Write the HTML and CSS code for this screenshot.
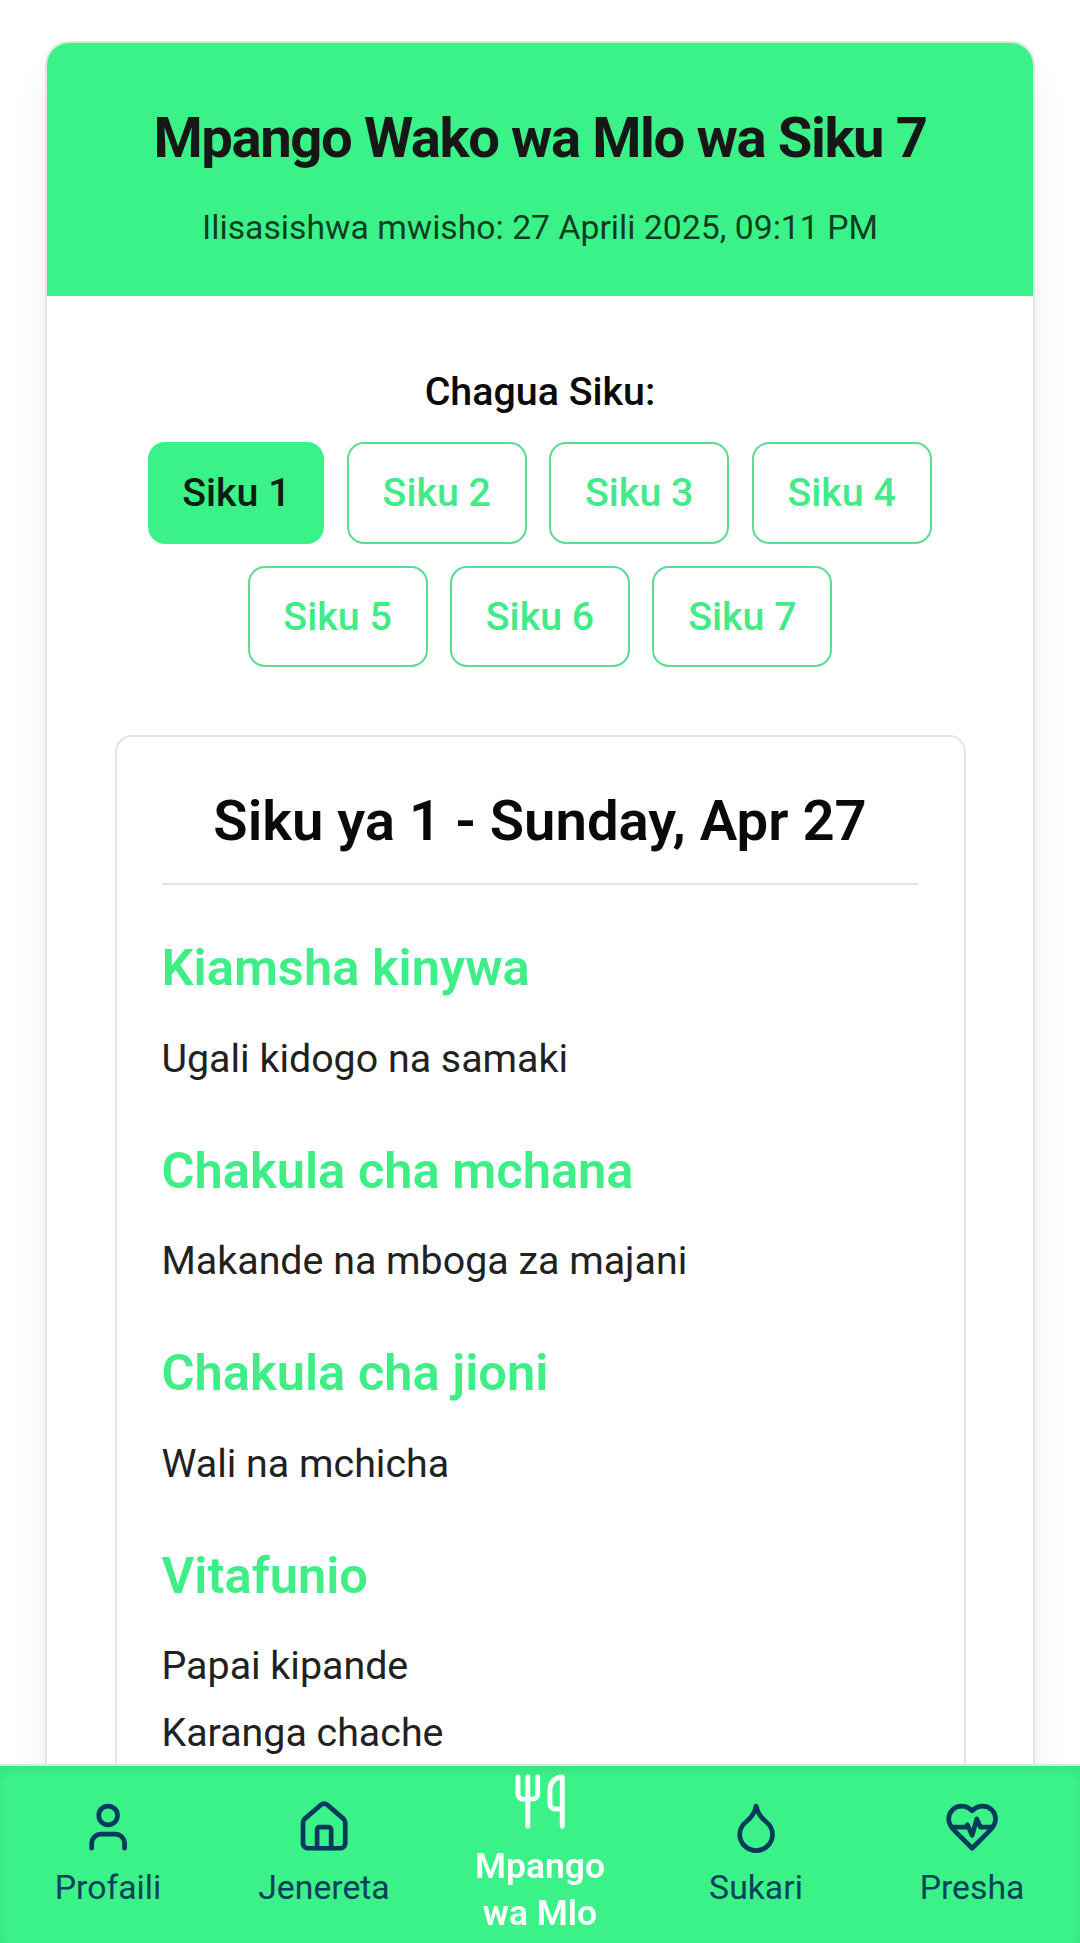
FILE: index.html
```html
<!doctype html>
<html lang="sw">

<head>
    <meta charset="utf-8" />
    <meta name="viewport" content="width=device-width, initial-scale=1.0" />
    <title>Mpango wa Mlo</title>
    <link rel="stylesheet" href="styles.css">
</head>

<body>
    <main class="page">
        <div class="plan-card">
            <header class="plan-header">
                <h1 class="plan-title">Mpango Wako wa Mlo wa Siku 7</h1>
                <p class="plan-updated">Ilisasishwa mwisho: 27 Aprili 2025, 09:11 PM</p>
            </header>

            <div class="plan-content">
                <p class="picker-label">Chagua Siku:</p>
                <div class="day-picker">
                    <button class="day-btn active">Siku 1</button>
                    <button class="day-btn">Siku 2</button>
                    <button class="day-btn">Siku 3</button>
                    <button class="day-btn">Siku 4</button>
                    <button class="day-btn">Siku 5</button>
                    <button class="day-btn">Siku 6</button>
                    <button class="day-btn">Siku 7</button>
                </div>

                <section class="day-card">
                    <h2 class="day-title">Siku ya 1 - Sunday, Apr 27</h2>
                    <div class="meals">
                        <div class="meal">
                            <h3>Kiamsha kinywa</h3>
                            <ul>
                                <li>Ugali kidogo na samaki</li>
                            </ul>
                        </div>
                        <div class="meal">
                            <h3>Chakula cha mchana</h3>
                            <ul>
                                <li>Makande na mboga za majani</li>
                            </ul>
                        </div>
                        <div class="meal">
                            <h3>Chakula cha jioni</h3>
                            <ul>
                                <li>Wali na mchicha</li>
                            </ul>
                        </div>
                        <div class="meal">
                            <h3>Vitafunio</h3>
                            <ul>
                                <li>Papai kipande</li>
                                <li>Karanga chache</li>
                            </ul>
                        </div>
                    </div>
                </section>
            </div>
        </div>
    </main>

    <nav class="bottom-nav">
        <a class="nav-item" href="#">
            <svg class="nav-icon" viewBox="0 0 24 24">
                <path d="M19 21v-2a4 4 0 0 0-4-4H9a4 4 0 0 0-4 4v2" />
                <circle cx="12" cy="7" r="4" />
            </svg>
            <span>Profaili</span>
        </a>
        <a class="nav-item" href="#">
            <svg class="nav-icon" viewBox="0 0 24 24">
                <path d="M15 21v-8a1 1 0 0 0-1-1h-4a1 1 0 0 0-1 1v8" />
                <path d="M3 10a2 2 0 0 1 .709-1.528l7-5.999a2 2 0 0 1 2.582 0l7 5.999A2 2 0 0 1 21 10v9a2 2 0 0 1-2 2H5a2 2 0 0 1-2-2z" />
            </svg>
            <span>Jenereta</span>
        </a>
        <a class="nav-item active" href="#">
            <svg class="nav-icon" viewBox="0 0 24 24">
                <path d="M3 2v7c0 1.1.9 2 2 2h4a2 2 0 0 0 2-2V2" />
                <path d="M7 2v20" />
                <path d="M21 15V2a5 5 0 0 0-5 5v6c0 1.1.9 2 2 2h3Zm0 0v7" />
            </svg>
            <span>Mpango wa Mlo</span>
        </a>
        <a class="nav-item" href="#">
            <svg class="nav-icon" viewBox="0 0 24 24">
                <path d="M12 22a7 7 0 0 0 7-7c0-2-1-3.9-3-5.5s-3.5-4-4-6.5c-.5 2.5-2 4.9-4 6.5C6 11.1 5 13 5 15a7 7 0 0 0 7 7z" />
            </svg>
            <span>Sukari</span>
        </a>
        <a class="nav-item" href="#">
            <svg class="nav-icon" viewBox="0 0 24 24">
                <path d="M19 14c1.49-1.46 3-3.21 3-5.5A5.5 5.5 0 0 0 16.5 3c-1.76 0-3 .5-4.5 2-1.5-1.5-2.74-2-4.5-2A5.5 5.5 0 0 0 2 8.5c0 2.3 1.5 4.05 3 5.5l7 7Z" />
                <path d="M3.22 12H9.5l.5-1 2 4.5 2-7 1.5 3.5h5.27" />
            </svg>
            <span>Presha</span>
        </a>
    </nav>
</body>

</html>
```

FILE: styles.css
```css
* {
    box-sizing: border-box;
    margin: 0;
    padding: 0;
}

body {
    height: 100vh;
    overflow: hidden;
    background: #fff;
    color: #0a0a0a;
    font-family: Roboto, sans-serif;
}

.page {
    padding: 41px 45px 0;
}

/* Outer card */
.plan-card {
    border: 2px solid #e5e5e5;
    border-top-color: #c5f3d8;
    border-radius: 24px;
    background: #fff;
    background-clip: padding-box;
    overflow: hidden;
    box-shadow: 0 28px 42px -8px rgba(0, 0, 0, 0.1), 0 11px 17px -11px rgba(0, 0, 0, 0.1);
}

.plan-header {
    height: 253px;
    padding: 56px 45px 0;
    background: #3af287;
    text-align: center;
}

.plan-title {
    font-size: 56.25px;
    font-weight: 700;
    line-height: 78.75px;
    letter-spacing: -0.025em;
    color: #171717;
}

.plan-updated {
    margin-top: 22.5px;
    font-size: 33.75px;
    line-height: 56.25px;
    color: rgba(0, 0, 0, 0.75);
}

.plan-content {
    padding: 67.5px;
}

.picker-label {
    font-size: 39.375px;
    font-weight: 500;
    line-height: 56.25px;
    text-align: center;
}

/* Day buttons */
.day-picker {
    display: flex;
    flex-wrap: wrap;
    justify-content: center;
    gap: 22.5px;
    margin-top: 22.5px;
}

.day-btn {
    height: 101.25px;
    padding: 0 33.75px;
    border: 2px solid #5bdb93;
    border-radius: 17px;
    background: #fff;
    color: #43ea88;
    font-family: inherit;
    font-size: 39.375px;
    font-weight: 500;
}

.day-btn.active {
    border: 0;
    background: #3af287;
    color: #0a1f12;
}

/* Selected day */
.day-card {
    margin-top: 67.5px;
    height: 1150px;
    padding: 45px;
    border: 2px solid #e5e5e5;
    border-radius: 17px;
}

.day-title {
    padding-bottom: 22.5px;
    border-bottom: 2px solid #e5e5e5;
    font-size: 56.25px;
    font-weight: 600;
    line-height: 78.75px;
    text-align: center;
}

.meals {
    display: flex;
    flex-direction: column;
    gap: 44.5px;
    margin-top: 44px;
}

.meal h3 {
    margin-bottom: 23px;
    font-size: 50.625px;
    font-weight: 600;
    line-height: 78.75px;
    color: #40ee88;
}

.meal ul {
    display: flex;
    flex-direction: column;
    gap: 10.5px;
    list-style: none;
}

.meal li {
    font-size: 39.375px;
    line-height: 56.25px;
    color: #212121;
}

/* Bottom navigation */
.bottom-nav {
    position: fixed;
    left: 0;
    right: 0;
    bottom: 0;
    display: grid;
    grid-template-columns: repeat(5, 1fr);
    height: 179px;
    border-top: 2px solid #d3ecdc;
    background: #3af287;
    box-shadow: inset 0 6px 11px rgba(0, 0, 0, 0.06);
}

.nav-item {
    display: flex;
    flex-direction: column;
    align-items: center;
    justify-content: center;
    gap: 10px;
    color: #08415c;
    font-size: 33.75px;
    line-height: 45px;
    text-align: center;
    text-decoration: none;
}

.nav-item.active {
    padding: 0 30px;
    color: #fff;
    font-weight: 600;
    transform: scale(1.05);
}

.nav-icon {
    width: 56.25px;
    height: 56.25px;
    flex-shrink: 0;
    fill: none;
    stroke: currentColor;
    stroke-width: 2;
    stroke-linecap: round;
    stroke-linejoin: round;
}

.nav-item:not(.active) .nav-icon {
    color: #053a5c;
}
```
